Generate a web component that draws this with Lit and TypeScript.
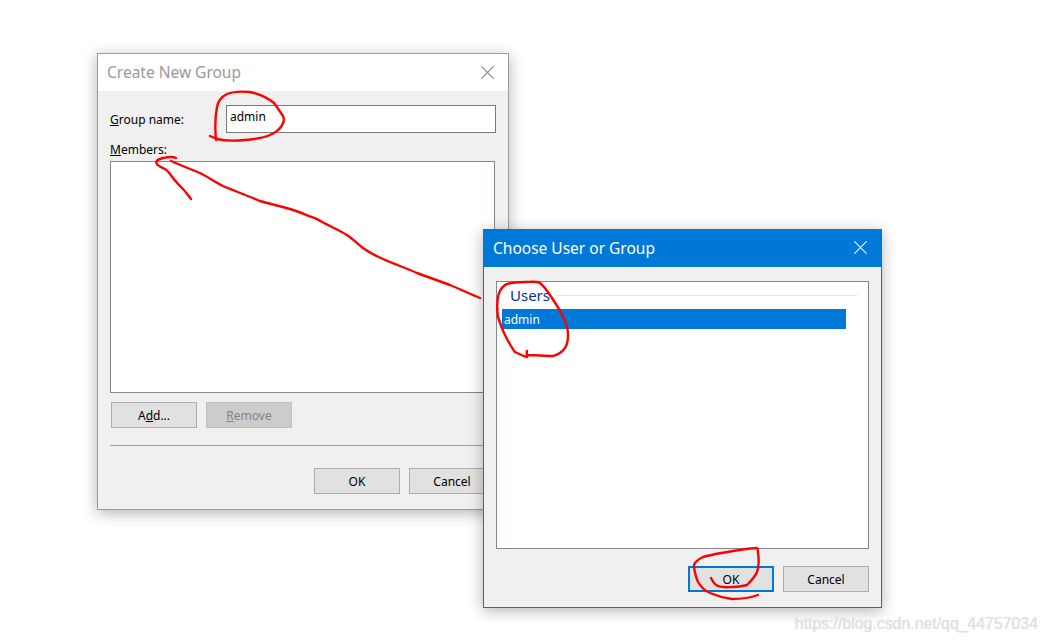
import { LitElement, html, css, svg } from "lit";
import { customElement } from "lit/decorators.js";

const close = html`<svg class="x" viewBox="0 0 14 14" width="13" height="13"><path d="M.5.5l13 13M13.5.5l-13 13" fill="none" stroke="currentColor" stroke-width="1.1"/></svg>`;

const strokes = [
  "M210 136 L217 139 C225 141 235 141 245 140 C258 139 272 136 278 130 C283 126 285 120 283 116 C279 110 277 107 274 103 C268 98 260 94 250 92 C240 91 232 92 227 94 C221 97 218 101 217 107 C215 117 215 129 216 140",
  "M191 199 C187 194 185 191 183 189 C179 185 176 182 173 178 C170 174 168 171 165 169 C161 167 158 166 157 164 C155 161 157 160 163 158 C168 157 172 156 176 158",
  "M171 161 C180 165 190 169 200 173 C208 177 215 182 223 186 C235 191 248 196 260 201 C270 204 280 206 290 209 C300 212 308 216 317 219 C327 225 337 229 347 235 C353 239 358 244 363 248 C370 253 376 256 383 259 C394 264 406 268 417 273 C428 277 439 281 450 285 C460 289 470 294 480 298",
  "M527 351 C526 354 528 356 527 357 C523 356 519 354 515 352 C511 347 508 341 505 335 C502 329 500 323 498 317 C497 310 497 303 498 297 C499 291 501 288 505 285 C511 282 518 282 525 282 C531 282 536 281 540 283 C545 287 548 292 552 298 C556 304 560 310 563 317 C566 322 568 329 568 335 C568 340 567 345 565 348 C562 352 558 355 553 356 C545 356 536 355 528 355",
  "M711 578 C713 582 715 585 718 586 C723 588 728 587 733 587 C738 587 743 586 747 585 C751 581 755 577 757 572 C759 566 759 559 758 553 C758 551 758 549 757 548 C749 548 741 550 733 551 C723 553 713 554 703 557 C699 559 695 561 694 565 C694 571 696 577 698 582 C701 587 705 591 710 593 C717 596 725 598 732 599 C741 599 750 598 758 595",
];

@customElement("app-root")
export class AppRoot extends LitElement {
  static styles = css`
    :host {
      display: block;
      position: relative;
      width: 1047px;
      height: 642px;
      overflow: hidden;
      background: #fff;
      font-family: "Noto Sans", "Open Sans", sans-serif;
      font-size: 12px;
      color: #000;
    }
    .dialog {
      position: absolute;
      box-sizing: border-box;
      display: flex;
      flex-direction: column;
      background: #f0f0f0;
      box-shadow: 0 3px 14px rgba(0, 0, 0, 0.3);
    }
    .group {
      left: 97px;
      top: 53px;
      width: 412px;
      height: 457px;
      border: 1px solid #9b9b9b;
    }
    .choose {
      left: 483px;
      top: 229px;
      width: 399px;
      height: 379px;
      border: 1px solid #0078d7;
    }
    .title {
      flex: none;
      box-sizing: border-box;
      height: 37px;
      display: flex;
      align-items: center;
      justify-content: space-between;
      font-size: 15.5px;
      background: #fff;
      color: #9a9a9a;
      padding: 0 14px 0 9px;
    }
    .title span {
      margin-top: -2px;
    }
    .choose .title {
      background: #0078d7;
      color: #fff;
    }
    .x {
      display: block;
      color: #7f7f7f;
    }
    .choose .x {
      color: #fff;
      margin-top: -2px;
    }
    .body {
      flex: 1;
      display: flex;
      flex-direction: column;
      padding: 14px 12px 0 12px;
    }
    .row {
      display: flex;
      align-items: center;
    }
    .label {
      width: 116px;
      flex: none;
      color: #000;
    }
    .input {
      flex: 1;
      box-sizing: border-box;
      height: 28px;
      background: #fff;
      border: 1px solid #7a7a7a;
      padding: 1px 3px 0;
      line-height: 19px;
    }
    .members {
      margin-top: 8px;
      height: 20px;
      padding-top: 1px;
      box-sizing: border-box;
      line-height: 16px;
    }
    .list {
      box-sizing: border-box;
      background: #fff;
      border: 1px solid #82878f;
    }
    .group .list {
      height: 232px;
      margin-right: 1px;
    }
    .choose .list {
      height: 268px;
      padding-left: 5px;
      padding-right: 22px;
    }
    .actions {
      display: flex;
      gap: 9px;
      margin: 9px 0 0 1px;
    }
    .sep {
      height: 1px;
      background: #a0a0a0;
      margin-top: 17px;
    }
    .footer {
      display: flex;
      justify-content: flex-end;
      gap: 9px;
      margin: 22px 1px 0 0;
    }
    .choose .footer {
      margin: 17px 0 0 0;
    }
    button {
      box-sizing: border-box;
      width: 86px;
      height: 26px;
      padding: 0;
      background: #e1e1e1;
      border: 1px solid #adadad;
      border-radius: 0;
      font: inherit;
      color: #000;
    }
    button.off {
      background: #ccc;
      border-color: #bfbfbf;
      color: #838383;
    }
    button.primary {
      border: 2px solid #0078d7;
    }
    .head {
      display: flex;
      align-items: center;
      height: 27px;
      margin-right: -11px;
      padding: 0 0 2px 8px;
      box-sizing: border-box;
      gap: 6px;
      font-size: 15px;
      color: #003399;
    }
    .head i {
      flex: 1;
      height: 1px;
      margin-top: 2px;
      background: #dde3ea;
    }
    .item {
      height: 20px;
      line-height: 21px;
      padding-left: 2px;
      background: #0078d7;
      color: #fff;
    }
    .ink {
      position: absolute;
      inset: 0;
      pointer-events: none;
    }
    .ink path {
      fill: none;
      stroke: #f00;
      stroke-width: 2.4;
      stroke-linecap: round;
      stroke-linejoin: round;
    }
    .mark {
      position: absolute;
      right: 9px;
      bottom: 9px;
      font-family: "Liberation Sans", Arial, sans-serif;
      font-size: 15.85px;
      line-height: 18px;
      color: #e2e2e2;
      text-shadow: 0 0 1px #d8d8d8;
    }
  `;

  render() {
    return html`
      <section class="dialog group">
        <header class="title"><span>Create New Group</span>${close}</header>
        <div class="body">
          <div class="row">
            <span class="label"><u>G</u>roup name:</span>
            <div class="input">admin</div>
          </div>
          <div class="members"><u>M</u>embers:</div>
          <div class="list"></div>
          <div class="actions">
            <button>A<u>d</u>d...</button>
            <button class="off"><u>R</u>emove</button>
          </div>
          <div class="sep"></div>
          <div class="footer">
            <button>OK</button>
            <button>Cancel</button>
          </div>
        </div>
      </section>
      <section class="dialog choose">
        <header class="title"><span>Choose User or Group</span>${close}</header>
        <div class="body">
          <div class="list">
            <div class="head"><span>Users</span><i></i></div>
            <div class="item">admin</div>
          </div>
          <div class="footer">
            <button class="primary">OK</button>
            <button>Cancel</button>
          </div>
        </div>
      </section>
      <svg class="ink" viewBox="0 0 1047 642" width="1047" height="642">
        ${strokes.map((d) => svg`<path d=${d}></path>`)}
      </svg>
      <div class="mark">https://blog.csdn.net/qq_44757034</div>
    `;
  }
}
